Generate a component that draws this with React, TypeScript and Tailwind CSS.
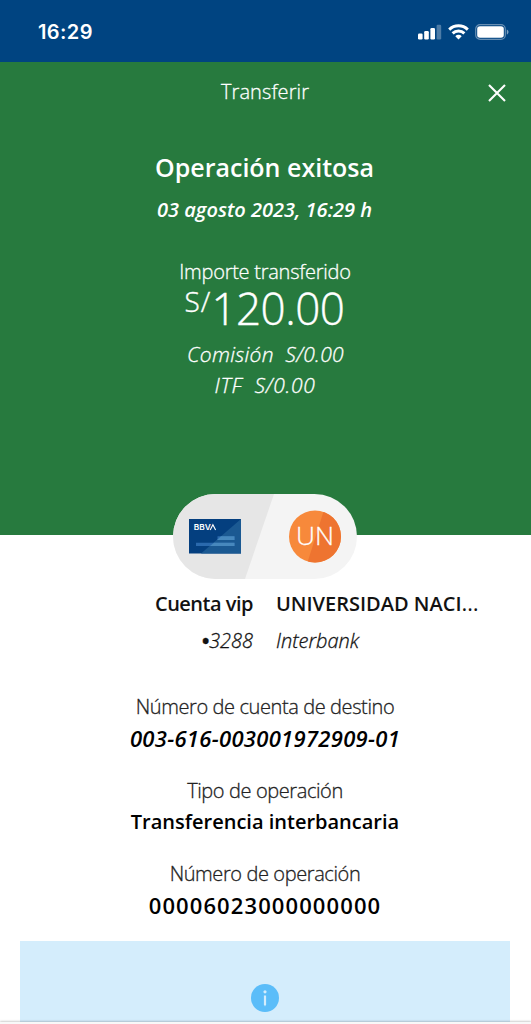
import React from 'react';

interface DetailProps {
  label: string;
  value: string;
  valueClass?: string;
}

function StatusBar() {
  return (
    <div className="h-[62px] shrink-0 bg-[#004481] flex items-center justify-between pl-[38px] pr-[22px] pt-[2px]">
      <span className="font-['Inter',sans-serif] text-[20px] leading-6 font-semibold tracking-[0.4px] text-white">16:29</span>
      <div className="flex items-center gap-[6px]">
        <svg width="25" height="16" viewBox="0 0 25 16" fill="#fff">
          <rect x="1" y="9.5" width="4.6" height="6" rx="1.2" />
          <rect x="7.2" y="7" width="4.6" height="8.5" rx="1.2" />
          <rect x="13.4" y="4" width="4.6" height="11.5" rx="1.2" />
          <rect x="19.6" y="0.8" width="4.6" height="14.7" rx="1.2" opacity="0.3" />
        </svg>
        <svg width="21" height="16" viewBox="0 0 21 16" fill="none" stroke="#fff" strokeWidth="2.9">
          <path d="M1.2 5.6A13.3 13.3 0 0 1 19.8 5.6" />
          <path d="M4.6 9.4A8.4 8.4 0 0 1 16.4 9.4" />
          <path d="M7.3 12.3A4.3 4.3 0 0 1 13.7 12.3L10.5 15.6Z" fill="#fff" stroke="none" />
        </svg>
        <svg width="34" height="16" viewBox="0 0 34 16">
          <rect x="0.7" y="0.7" width="29.6" height="14.6" rx="4.4" fill="none" stroke="#fff" strokeOpacity="0.4" strokeWidth="1.2" />
          <rect x="2.2" y="2.2" width="26.6" height="11.6" rx="2.8" fill="#fff" />
          <path d="M31.8 5.4v5.2c1-.4 1.7-1.4 1.7-2.6s-.7-2.2-1.7-2.6z" fill="#fff" fillOpacity="0.5" />
        </svg>
      </div>
    </div>
  );
}

function AccountsPill() {
  return (
    <svg width="184" height="85" viewBox="0 0 184 85" className="shrink-0">
      <defs>
        <clipPath id="pill">
          <rect width="184" height="85" rx="42.5" />
        </clipPath>
        <clipPath id="avatar">
          <circle cx="142" cy="42.5" r="26" />
        </clipPath>
      </defs>
      <g clipPath="url(#pill)">
        <rect width="184" height="85" fill="#f4f4f4" />
        <path d="M0 0H101L72 85H0z" fill="#e6e6e6" />
      </g>
      <rect x="16" y="25" width="52" height="34.5" fill="#043f7f" />
      <path d="M68 25V59.5H28z" fill="#1b5992" />
      <path d="M44.5 42.2H61.5V46H44.5zM23 48.7H61.5V52H23z" fill="#2a69ad" />
      <path d="M48 42.2H61.5V46H44zM41 48.7H61.5V52H37z" fill="#4788bd" />
      <text x="20.8" y="36" fill="#fff" fontFamily="Inter, sans-serif" fontSize="8" fontWeight="600" textLength="17" lengthAdjust="spacingAndGlyphs">BBV</text>
      <path d="M37.2 36L39.9 30.8L42.6 36" fill="none" stroke="#fff" strokeWidth="1.1" />
      <g clipPath="url(#avatar)">
        <rect x="116" y="16" width="52" height="53" fill="#f7893b" />
        <path d="M151 16H170V70H134z" fill="#ee7430" />
      </g>
      <text x="142" y="50.5" textAnchor="middle" fill="#fff" stroke="#fff" strokeWidth="0.3" fontFamily="Open Sans, sans-serif" fontSize="26.5" fontWeight="300" textLength="38" lengthAdjust="spacingAndGlyphs">UN</text>
    </svg>
  );
}

function Detail({ label, value, valueClass = '' }: DetailProps) {
  return (
    <div className="flex flex-col items-center whitespace-nowrap">
      <span className="text-[20px] leading-8 font-light tracking-[-0.4px] text-[#222] [-webkit-text-stroke:0.3px]">{label}</span>
      <span className={`leading-[30px] h-8 font-semibold text-black ${valueClass}`}>{value}</span>
    </div>
  );
}

export default function App() {
  return (
    <div className="w-full h-[1024px] flex flex-col overflow-hidden bg-white font-['Open_Sans',sans-serif]">
      <StatusBar />

      <section className="h-[473px] shrink-0 bg-[#277a3e] text-white flex flex-col items-center whitespace-nowrap">
        <header className="w-full h-[60px] grid grid-cols-[1fr_auto_1fr] items-center pr-[24px] pl-[23px]">
          <span />
          <h1 className="text-[20px] leading-8 font-light tracking-[0.1px] [-webkit-text-stroke:0.3px]">Transferir</h1>
          <button aria-label="Cerrar" className="justify-self-end">
            <svg width="20" height="20" viewBox="0 0 20 20" stroke="#fff" strokeWidth="2.1" className="mt-[2px]">
              <path d="M2 2L18 18M18 2L2 18" />
            </svg>
          </button>
        </header>
        <h2 className="mt-[25px] pr-[2px] text-[25px] leading-10 font-semibold">Operación exitosa</h2>
        <p className="mt-[7px] pr-[2px] text-[20px] leading-8 font-semibold italic">03 agosto 2023, 16:29 h</p>
        <p className="mt-[30px] pr-px text-[20px] leading-8 font-light tracking-[-0.25px] [-webkit-text-stroke:0.3px]">Importe transferido</p>
        <div className="h-[42px] pr-[2px] flex items-start font-light [-webkit-text-stroke:0.4px]">
          <span className="text-[28px] leading-[26px] tracking-[1px]">S/</span>
          <span className="text-[44px] leading-[40px] tracking-[-0.5px]">120.00</span>
        </div>
        <p className="mt-[9px] text-[21px] leading-[31px] font-light tracking-[0.3px] italic [-webkit-text-stroke:0.3px]">Comisión&nbsp; S/0.00</p>
        <p className="pr-px text-[21px] leading-[31px] font-light tracking-[0.7px] italic [-webkit-text-stroke:0.3px]">ITF&nbsp; S/0.00</p>
      </section>

      <div className="relative -mt-[41px] h-[85px] shrink-0 flex justify-center pr-[2px]">
        <AccountsPill />
      </div>

      <section className="grid grid-cols-[253px_1fr] gap-x-[23px] mt-[6px] text-[20px] leading-[37px] text-[#121212] whitespace-nowrap">
        <span className="text-right font-semibold tracking-[-0.5px]">Cuenta vip</span>
        <span className="font-semibold">
          UNIVERSIDAD NACI<span className="font-normal text-[22px] leading-5">…</span>
        </span>
        <span className="text-right font-light italic [-webkit-text-stroke:0.3px]">
          <span className="font-bold">•</span>3288
        </span>
        <span className="font-light italic [-webkit-text-stroke:0.3px]">Interbank</span>
      </section>

      <section className="mt-[32px] pr-px flex flex-col gap-[19.5px]">
        <Detail
          label="Número de cuenta de destino"
          value="003-616-003001972909-01"
          valueClass="italic text-[22px] tracking-[0.3px]"
        />
        <Detail label="Tipo de operación" value="Transferencia interbancaria" valueClass="text-[20px]" />
        <Detail label="Número de operación" value="00006023000000000" valueClass="text-[22px] tracking-[1.1px]" />
      </section>

      <div className="mt-auto h-[83px] shrink-0 flex flex-col">
        <div className="ml-5 mr-[21px] h-[81px] bg-[#d4edfc] flex justify-center pt-[43px]">
          <svg width="28" height="28" viewBox="0 0 28 28">
            <circle cx="14" cy="14" r="14" fill="#5bbdf9" />
            <circle cx="14" cy="7.8" r="1.6" fill="#d4edfc" />
            <path d="M12.9 11.6H15.1V20.5L14 22.5L12.9 20.5z" fill="#d4edfc" />
          </svg>
        </div>
        <div className="h-[2px] bg-[#f8f8f8] shadow-[0_-1px_2px_rgba(0,0,0,0.2)]" />
      </div>
    </div>
  );
}
